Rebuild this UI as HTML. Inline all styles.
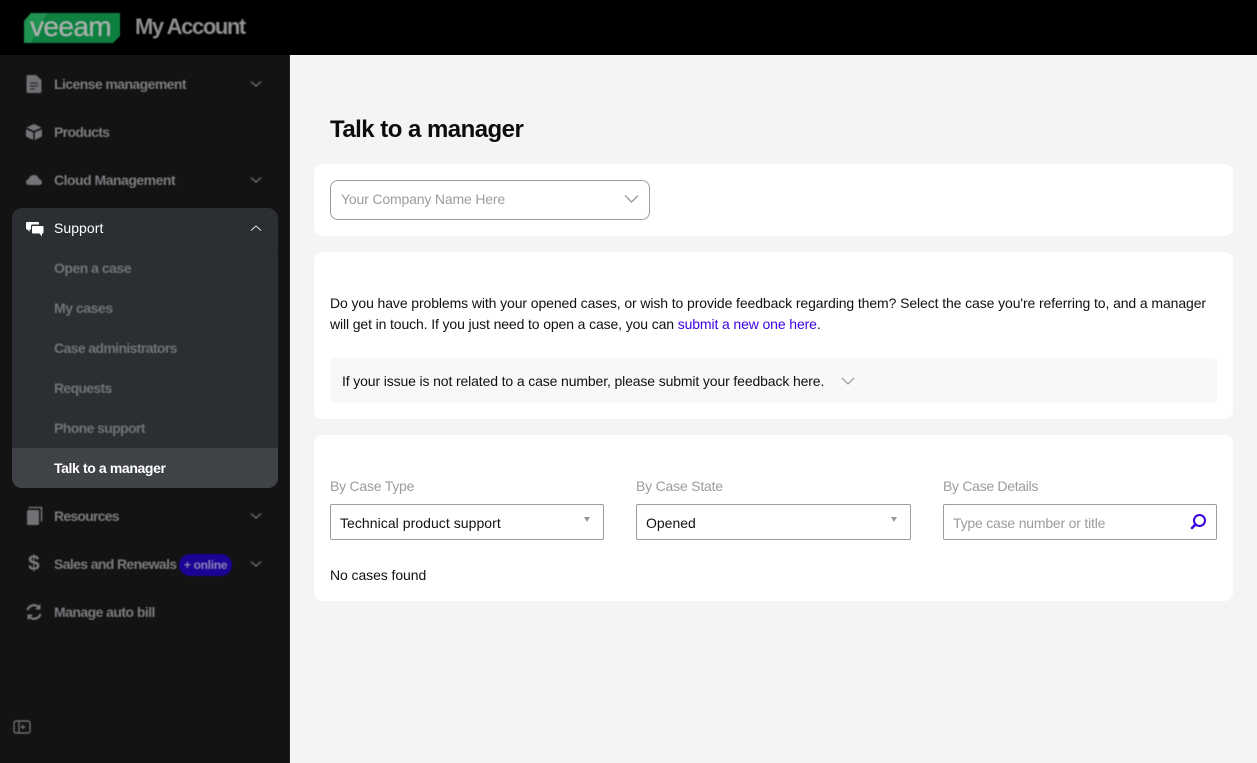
<!DOCTYPE html>
<html lang="en"><head><meta charset="utf-8"><title>Talk to a manager</title>
<style>
html,body{margin:0;padding:0;width:1257px;height:763px;overflow:hidden;background:#f3f4f4;font-family:"Liberation Sans",sans-serif;font-size:14px;color:#111}
.a{position:absolute;white-space:nowrap}
.t{line-height:20px}
#top{left:0;top:0;width:1257px;height:55px;background:#000}
#side{left:0;top:55px;width:289px;height:708px;background:#131313;border-right:1px solid #222}
.card{position:absolute;background:#fff;border-radius:8px}
.n{color:#7b7d80;filter:blur(.6px);font-size:14px;font-weight:700}
.sub{color:#707377;filter:blur(.6px);font-size:14px;font-weight:700}
.w{color:#fff;font-size:14px}
svg{position:absolute;display:block}
.b{filter:blur(.6px)}
.lbl{color:#9a9ca0}
.box{position:absolute;background:#fff;border:1px solid #9a9da2;border-radius:2px;box-sizing:border-box}
</style></head><body>
<div class="a" id="top"></div>
<div class="a" id="side"></div>

<svg class="b" style="left:23px;top:13px" width="98" height="31" viewBox="0 0 98 31"><path d="M8 0H97V23L90 30H1V8Z" fill="#0d8040"/><path d="M8 0H24L8 30H1V8Z" fill="#1f9150"/></svg>
<div class="a b" style="left:30px;top:11px;font-size:28px;line-height:31px;color:#aab0ad;letter-spacing:-.6px;-webkit-text-stroke:.35px #aab0ad">veeam</div>
<div class="a t b" style="left:135px;top:15px;font-size:22px;line-height:24px;font-weight:700;color:#8d8e90;letter-spacing:-1.4px">My Account</div>

<div class="a" style="left:12px;top:208px;width:266px;height:280px;background:#2b2e33;border-radius:10px;overflow:hidden">
  <div style="position:absolute;left:0;top:240px;width:266px;height:40px;background:#3f4247"></div>
  <div style="position:absolute;left:0;top:40px;width:266px;height:1px;background:#272a2e"></div>
</div>

<div class="a t n" style="left:54px;top:74px;letter-spacing:-.58px">License management</div>
<div class="a t n" style="left:54px;top:122px;letter-spacing:-.67px">Products</div>
<div class="a t n" style="left:54px;top:170px;letter-spacing:-.5px">Cloud Management</div>
<div class="a t w" style="left:54px;top:218px;letter-spacing:.05px">Support</div>
<div class="a t sub" style="left:54px;top:258px;letter-spacing:-.5px">Open a case</div>
<div class="a t sub" style="left:54px;top:298px;letter-spacing:-.45px">My cases</div>
<div class="a t sub" style="left:54px;top:338px;letter-spacing:-.62px">Case administrators</div>
<div class="a t sub" style="left:54px;top:378px;letter-spacing:-.68px">Requests</div>
<div class="a t sub" style="left:54px;top:418px;letter-spacing:-.6px">Phone support</div>
<div class="a t w" style="left:54px;top:458px;font-weight:700;letter-spacing:-.38px">Talk to a manager</div>
<div class="a t n" style="left:54px;top:506px;letter-spacing:-.75px">Resources</div>
<div class="a t n" style="left:54px;top:554px;letter-spacing:-.63px">Sales and Renewals</div>
<div class="a b" style="left:179px;top:554px;width:53px;height:22px;border-radius:11px;background:#1c0394;color:#8b86b8;font-size:12px;font-weight:700;line-height:22px;text-align:center;letter-spacing:-.3px">+ online</div>
<div class="a t n" style="left:54px;top:602px;letter-spacing:-.55px">Manage auto bill</div>

<svg class="b" style="left:26px;top:74px" width="16" height="20" viewBox="0 0 16 20"><path d="M2 1H10L15.500 6V17.500Q15.500 19 14 19H2Q.5 19 .5 17.500V2.500Q.5 1 2 1Z" fill="#6f7174"/><path d="M4 9H12M4 12H12M4 15H9" stroke="#2b2c2e" stroke-width="1.200"/></svg>
<svg class="b" style="left:26px;top:124px" width="16" height="16" viewBox="0 0 16 16"><path d="M8 0L15.500 3.500L8 7L.5 3.500Z" fill="#737578"/><path d="M0 5.200L7.200 8.500V16L0 12.500ZM16 5.200L8.800 8.500V16L16 12.500Z" fill="#737578"/></svg>
<svg class="b" style="left:26px;top:173px" width="16" height="13" viewBox="0 0 16 13"><path d="M3.500 12Q0 12 0 9Q0 6.800 2.500 6.300Q3.500 2 8 2Q12 2 13 6Q16 6.800 16 9.200Q16 12 13 12Z" fill="#737578"/></svg>
<svg style="left:26px;top:221px" width="18" height="16" viewBox="0 0 18 16"><path d="M1 1H12Q13 1 13 2V3.500H6.500Q5 3.500 5 5V8.500H3.500V11L1.500 8.500H1Q0 8.500 0 7.500V2Q0 1 1 1Z" fill="#fff"/><path d="M7 5H16.500Q17.500 5 17.500 6V11.500Q17.500 12.500 16.500 12.500H16V15.500L13.500 12.500H7Q6 12.500 6 11.500V6Q6 5 7 5Z" fill="#fff"/></svg>
<svg class="b" style="left:26px;top:506px" width="17" height="20" viewBox="0 0 17 20"><path d="M2 4H12Q13 4 13 5V18Q13 19 12 19H2Q1 19 1 18V5Q1 4 2 4Z" fill="#707275"/><path d="M2.500 1.500H15.500V15.500" fill="none" stroke="#707275" stroke-width="1.600"/></svg>
<div class="a b" style="left:28px;top:552px;font-size:21px;line-height:24px;font-weight:700;color:#77797c">$</div>
<svg class="b" style="left:25px;top:603px" width="18" height="18" viewBox="0 0 18 18"><path d="M2.500 7A6.800 6.800 0 0 1 14 4.500M15.500 11A6.800 6.800 0 0 1 4 13.500" fill="none" stroke="#77797c" stroke-width="2.300"/><path d="M15.500 .8V6.500H10ZM2.500 17.200V11.500H8Z" fill="#77797c"/></svg>
<svg class="b" style="left:13px;top:720px" width="18" height="14" viewBox="0 0 18 14"><rect x="1" y="1" width="16" height="12" rx="2" fill="none" stroke="#6d6f72" stroke-width="1.400"/><path d="M6 1V13" stroke="#6d6f72" stroke-width="1.400"/><path d="M12.500 7H8.500M10.500 5L8.500 7L10.500 9" fill="none" stroke="#6d6f72" stroke-width="1.200"/></svg>

<svg class="b" style="left:250px;top:80px" width="12" height="8"><path d="M1 1.500L6 6L11 1.500" fill="none" stroke="#6b6d70" stroke-width="1.400"/></svg>
<svg class="b" style="left:250px;top:176px" width="12" height="8"><path d="M1 1.500L6 6L11 1.500" fill="none" stroke="#6b6d70" stroke-width="1.400"/></svg>
<svg style="left:250px;top:224px" width="12" height="8"><path d="M1 6.500L6 2L11 6.500" fill="none" stroke="#e0e0e0" stroke-width="1"/></svg>
<svg class="b" style="left:250px;top:512px" width="12" height="8"><path d="M1 1.500L6 6L11 1.500" fill="none" stroke="#6b6d70" stroke-width="1.400"/></svg>
<svg class="b" style="left:250px;top:560px" width="12" height="8"><path d="M1 1.500L6 6L11 1.500" fill="none" stroke="#6b6d70" stroke-width="1.400"/></svg>

<div class="a" style="left:330px;top:115px;font-size:24px;line-height:30px;font-weight:700;color:#0b0c0e;letter-spacing:-.53px">Talk to a manager</div>

<div class="card" style="left:314px;top:164px;width:919px;height:72px"></div>
<div class="card" style="left:314px;top:252px;width:919px;height:167px"></div>
<div class="card" style="left:314px;top:435px;width:919px;height:166px"></div>

<div class="box" style="left:330px;top:180px;width:320px;height:40px;border-radius:8px"></div>
<div class="a t lbl" style="left:341px;top:189px;letter-spacing:-.16px">Your Company Name Here</div>
<svg style="left:624px;top:194px" width="15" height="10"><path d="M1 1.500L7.500 8L14 1.500" fill="none" stroke="#9a9da2" stroke-width="1.400"/></svg>

<div class="a t" style="left:330px;top:293px;letter-spacing:-.1px">Do you have problems with your opened cases, or wish to provide feedback regarding them? Select the case you're referring to, and a manager</div>
<div class="a t" style="left:330px;top:314px;letter-spacing:-.12px">will get in touch. If you just need to open a case, you can <span style="color:#3c00e6">submit a new one here</span>.</div>

<div class="a" style="left:330px;top:358px;width:887px;height:45px;background:#f8f8f8;border-radius:3px"></div>
<div class="a t" style="left:342px;top:371px;letter-spacing:-.13px">If your issue is not related to a case number, please submit your feedback here.</div>
<svg style="left:841px;top:377px" width="14" height="9"><path d="M1 1L7 7L13 1" fill="none" stroke="#8d8f92" stroke-width="1.100"/></svg>

<div class="a t lbl" style="left:330px;top:476px;letter-spacing:-.23px">By Case Type</div>
<div class="a t lbl" style="left:636px;top:476px;letter-spacing:-.2px">By Case State</div>
<div class="a t lbl" style="left:943px;top:476px;letter-spacing:-.3px">By Case Details</div>

<div class="box" style="left:330px;top:504px;width:274px;height:36px"></div>
<div class="a t" style="left:340px;top:513px;letter-spacing:.05px">Technical product support</div>
<svg style="left:584px;top:517px" width="6" height="5"><path d="M0 0H6L3 5Z" fill="#96989b"/></svg>

<div class="box" style="left:636px;top:504px;width:275px;height:36px"></div>
<div class="a t" style="left:646px;top:513px;letter-spacing:0">Opened</div>
<svg style="left:891px;top:517px" width="6" height="5"><path d="M0 0H6L3 5Z" fill="#96989b"/></svg>

<div class="box" style="left:943px;top:504px;width:274px;height:36px"></div>
<div class="a t lbl" style="left:953px;top:513px;letter-spacing:-.2px">Type case number or title</div>
<svg style="left:1190px;top:513px" width="17" height="17" viewBox="0 0 17 17"><circle cx="9.500" cy="7.500" r="5.500" fill="none" stroke="#3c00e6" stroke-width="2"/><path d="M5.500 11.500L2 15" stroke="#3c00e6" stroke-width="2.600" stroke-linecap="round"/></svg>

<div class="a t" style="left:330px;top:565px;letter-spacing:-.08px">No cases found</div>
</body></html>
